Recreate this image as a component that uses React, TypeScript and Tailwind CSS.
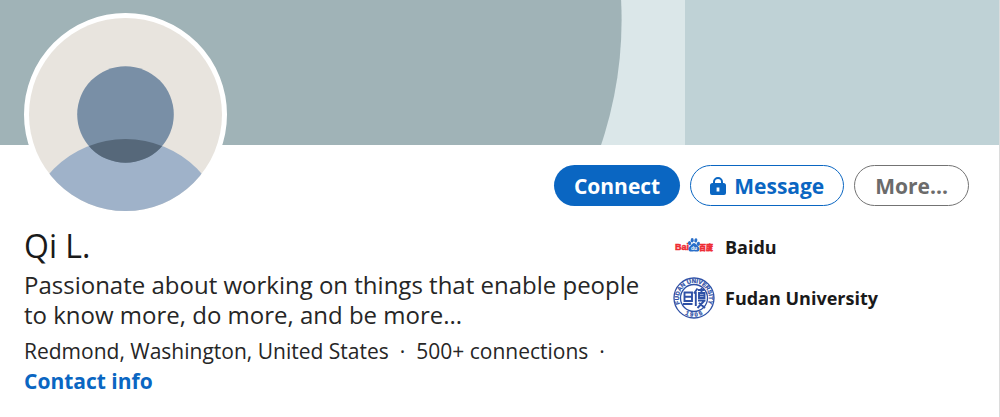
import React from "react";

interface Affiliation {
  id: number;
  name: string;
  logo: React.ReactElement;
}

const BaiduLogo = () => (
  <svg width="40" height="40" viewBox="0 0 40 40" aria-hidden="true">
    <text
      x="1"
      y="23"
      fill="#ee2b33"
      stroke="#ee2b33"
      strokeWidth="0.5"
      fontFamily="Liberation Sans, sans-serif"
      fontWeight="700"
      fontSize="9"
    >
      Bai
    </text>
    <text
      x="25"
      y="22.800"
      fill="#ee2b33"
      stroke="#ee2b33"
      strokeWidth="0.5"
      fontFamily="Noto Sans CJK SC, sans-serif"
      fontWeight="900"
      fontSize="7"
    >
      百度
    </text>
    <g fill="#2a6fc9">
      <ellipse cx="15.600" cy="16.200" rx="1.600" ry="2.100" transform="rotate(-15 15.600 16.200)" />
      <ellipse cx="18.200" cy="13.200" rx="1.500" ry="2.200" />
      <ellipse cx="21.800" cy="13.400" rx="1.500" ry="2.200" transform="rotate(12 21.800 13.400)" />
      <ellipse cx="24.300" cy="16.800" rx="1.600" ry="2.100" transform="rotate(15 24.300 16.800)" />
      <path d="M20 15.900c1.400 0 2 1 2.800 2 1 1.200 2.700 2 2.700 4 0 1.700-1.200 2.700-2.700 2.600-1 0-1.800-.3-2.800-.3s-1.800.3-2.800.3c-1.500.1-2.700-.9-2.700-2.600 0-2 1.700-2.800 2.700-4 .8-1 1.400-2 2.800-2z" />
    </g>
    <text
      x="17"
      y="23.400"
      fill="#ffffff"
      fontFamily="Liberation Sans, sans-serif"
      fontWeight="700"
      fontSize="5"
    >
      du
    </text>
  </svg>
);

const FudanLogo = () => (
  <svg width="42" height="42" viewBox="0 0 42 42" aria-hidden="true">
    <defs>
      <path id="seal-top" d="M9.900 31.100A15 15 0 1 1 32.100 31.100" />
      <path id="seal-bottom" d="M8.200 34.600A18.700 18.700 0 0 0 33.800 34.600" />
    </defs>
    <circle cx="21" cy="21" r="20" fill="#ffffff" stroke="#2f51a6" strokeWidth="1.300" />
    <circle cx="21" cy="21" r="13.500" fill="#ffffff" stroke="#2f51a6" strokeWidth="1.300" />
    <g
      fill="#2f51a6"
      stroke="#2f51a6"
      strokeWidth="0.250"
      fontFamily="Liberation Sans, sans-serif"
      fontWeight="700"
      fontSize="6"
      textAnchor="middle"
    >
      <text>
        <textPath href="#seal-top" startOffset="50%">
          FUDAN UNIVERSITY
        </textPath>
      </text>
      <text>
        <textPath href="#seal-bottom" startOffset="50%">
          1 9 0 5
        </textPath>
      </text>
    </g>
    <g fill="none" stroke="#2f51a6" strokeWidth="1.900">
      <path d="M11.500 15.500h7.500v8.500h-7.500zM11.500 19.700h7.500M10 27h9.500" />
      <path d="M24.500 11.500l-3.500 5M22.800 15v14M25 13h6.500M26 16h5.500v5H26zM26 18.500h5.500M25 23.500h7.500M31.500 23.500l-7 7.500M26 26l6 5M28.500 11v5" />
    </g>
  </svg>
);

const LockIcon = () => (
  <svg width="16" height="20" viewBox="0 0 16 20" aria-hidden="true">
    <path
      fill="currentColor"
      fillRule="evenodd"
      d="M3 7V6a5 5 0 0 1 10 0v1h.5A2.500 2.500 0 0 1 16 9.500V17a2 2 0 0 1-2 2H2a2 2 0 0 1-2-2V9.500A2.500 2.500 0 0 1 2.500 7H3zm2 0h6V6a3 3 0 0 0-6 0v1zm1.600 4.500v4h2.800v-4H6.600z"
    />
  </svg>
);

const ProfileAvatar = () => (
  <svg
    viewBox="0 0 193 193"
    className="block w-full rounded-full"
    role="img"
    aria-label="Profile photo"
  >
    <rect width="193" height="193" fill="#e8e4de" />
    <circle cx="96.500" cy="222" r="101" fill="#9fb2c9" />
    <circle cx="96.500" cy="96.500" r="48.300" fill="#798fa6" />
    <clipPath id="head">
      <circle cx="96.500" cy="96.500" r="48.300" />
    </clipPath>
    <circle cx="96.500" cy="222" r="101" fill="#56687a" clipPath="url(#head)" />
  </svg>
);

const Banner = () => (
  <svg
    viewBox="0 0 999 145"
    preserveAspectRatio="xMidYMin slice"
    className="block h-[145px] w-full"
    aria-hidden="true"
  >
    <rect width="999" height="145" fill="#dbe7e9" />
    <rect x="685" width="314" height="145" fill="#bfd2d6" />
    <rect width="240" height="145" fill="#a0b3b7" />
    <circle cx="231.600" cy="20" r="390" fill="#a0b3b7" />
  </svg>
);

const Profile = () => {
  const affiliations: Affiliation[] = [
    { id: 1, name: "Baidu", logo: <BaiduLogo /> },
    { id: 2, name: "Fudan University", logo: <FudanLogo /> },
  ];

  return (
    <div className="min-h-screen bg-white border-r border-[#dcdcdc] font-['Open_Sans','Noto_Sans',sans-serif] text-[#262626]">
      <Banner />

      {/* Avatar and actions */}
      <div className="flex items-start justify-between pl-6 pr-[30px]">
        <div className="relative -mt-[132px] w-[203px] shrink-0 rounded-full border-5 border-white bg-white">
          <ProfileAvatar />
        </div>
        <div className="flex gap-[10px] pt-5 text-[21px] font-bold leading-6">
          <button className="h-[41px] rounded-full bg-[#0a66c2] px-5 text-white">
            Connect
          </button>
          <button className="flex h-[41px] items-center gap-2 rounded-full border border-[#0a66c2] px-[19px] text-[#0a66c2]">
            <LockIcon />
            Message
          </button>
          <button className="h-[41px] rounded-full border border-[#737373] px-5 text-[#6b6b6b]">
            More...
          </button>
        </div>
      </div>

      {/* Details */}
      <div className="flex items-start justify-between gap-8 pl-6 pr-[30px] pt-[10px]">
        <div className="min-w-0 flex-1">
          <h1 className="text-[32px] leading-10 text-[#1a1a1a]">Qi L.</h1>
          <p className="mt-1 text-2xl leading-[30px]">
            Passionate about working on things that enable people to know more,
            do more, and be more...
          </p>
          <ul className="mt-[6px] flex flex-wrap text-[21px] leading-[30px]">
            <li>Redmond, Washington, United States</li>
            <li className="before:mx-[11px] before:content-['·']">
              500+ connections
            </li>
            <li className="before:ml-[11px] before:content-['·']"></li>
          </ul>
          <a href="#contact" className="text-[21px] font-bold leading-[30px] text-[#0a66c2]">
            Contact info
          </a>
        </div>
        <ul className="w-[296px] shrink-0 text-lg font-bold leading-6 text-[#1a1a1a]">
          {affiliations.map((item) => (
            <li key={item.id} className="mb-[9px] flex h-[42px] items-center gap-[10px]">
              <span className="flex w-[42px] justify-center">{item.logo}</span>
              {item.name}
            </li>
          ))}
        </ul>
      </div>
    </div>
  );
};

export default Profile;
